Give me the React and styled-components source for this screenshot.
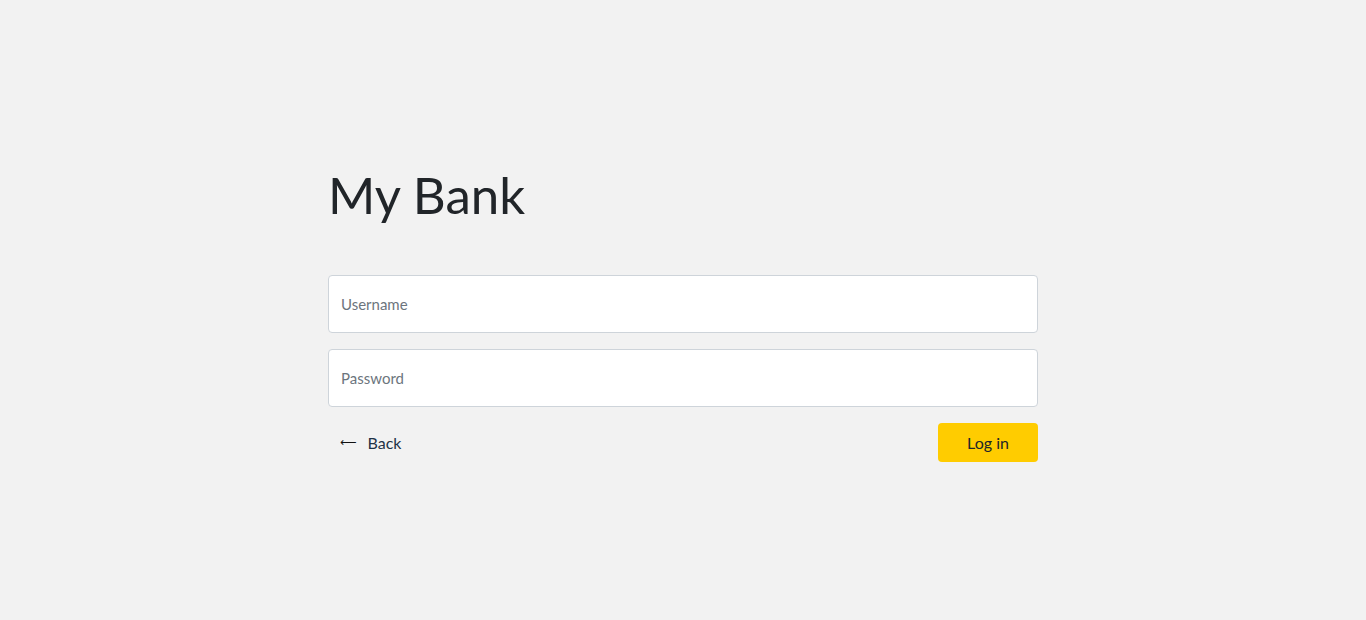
import React from 'react'
import styled, { createGlobalStyle } from 'styled-components'

const GlobalStyle = createGlobalStyle`
  * { box-sizing: border-box; }
  body {
    margin: 0;
    background: #f2f2f2;
    font-family: Lato, "Noto Sans", sans-serif;
    color: #212529;
  }
`

export default function App() {
  return (
    <Page>
      <GlobalStyle />
      <Container>
        <Title>My Bank</Title>
        <Form onSubmit={e => e.preventDefault()}>
          <Field type="text" placeholder="Username" />
          <Field type="password" placeholder="Password" />
          <Actions>
            <BackLink href="#">
              <Arrow>&#10229;</Arrow>
              Back
            </BackLink>
            <Submit type="submit">Log in</Submit>
          </Actions>
        </Form>
      </Container>
    </Page>
  )
}

const Page = styled.main`
  min-height: 620px;
  padding-top: 164px;
`

const Container = styled.div`
  width: 710px;
  margin: 0 auto;
`

const Title = styled.h1`
  margin: 0 0 50px;
  font-size: 51px;
  font-weight: 400;
  line-height: 61px;
  color: #212529;
`

const Form = styled.form`
  display: flex;
  flex-direction: column;
  gap: 16px;
`

const Field = styled.input`
  width: 100%;
  height: 58px;
  padding: 0 12px;
  border: 1px solid #ced4da;
  border-radius: 4px;
  background: #fff;
  font-family: inherit;
  font-size: 15px;
  color: #212529;

  &::placeholder {
    color: #6c757d;
  }
`

const Actions = styled.div`
  display: flex;
  align-items: center;
  justify-content: space-between;
`

const BackLink = styled.a`
  display: flex;
  align-items: center;
  gap: 11px;
  padding-left: 12px;
  font-size: 16px;
  color: #1f3347;
  text-decoration: none;
`

const Arrow = styled.span`
  font-family: "DejaVu Sans", sans-serif;
  font-size: 11.5px;
  line-height: 1;
  color: #111;
`

const Submit = styled.button`
  width: 100px;
  height: 39px;
  border: none;
  border-radius: 4px;
  background: #ffcc00;
  font-family: inherit;
  font-size: 16px;
  color: #212529;
  cursor: pointer;
`
